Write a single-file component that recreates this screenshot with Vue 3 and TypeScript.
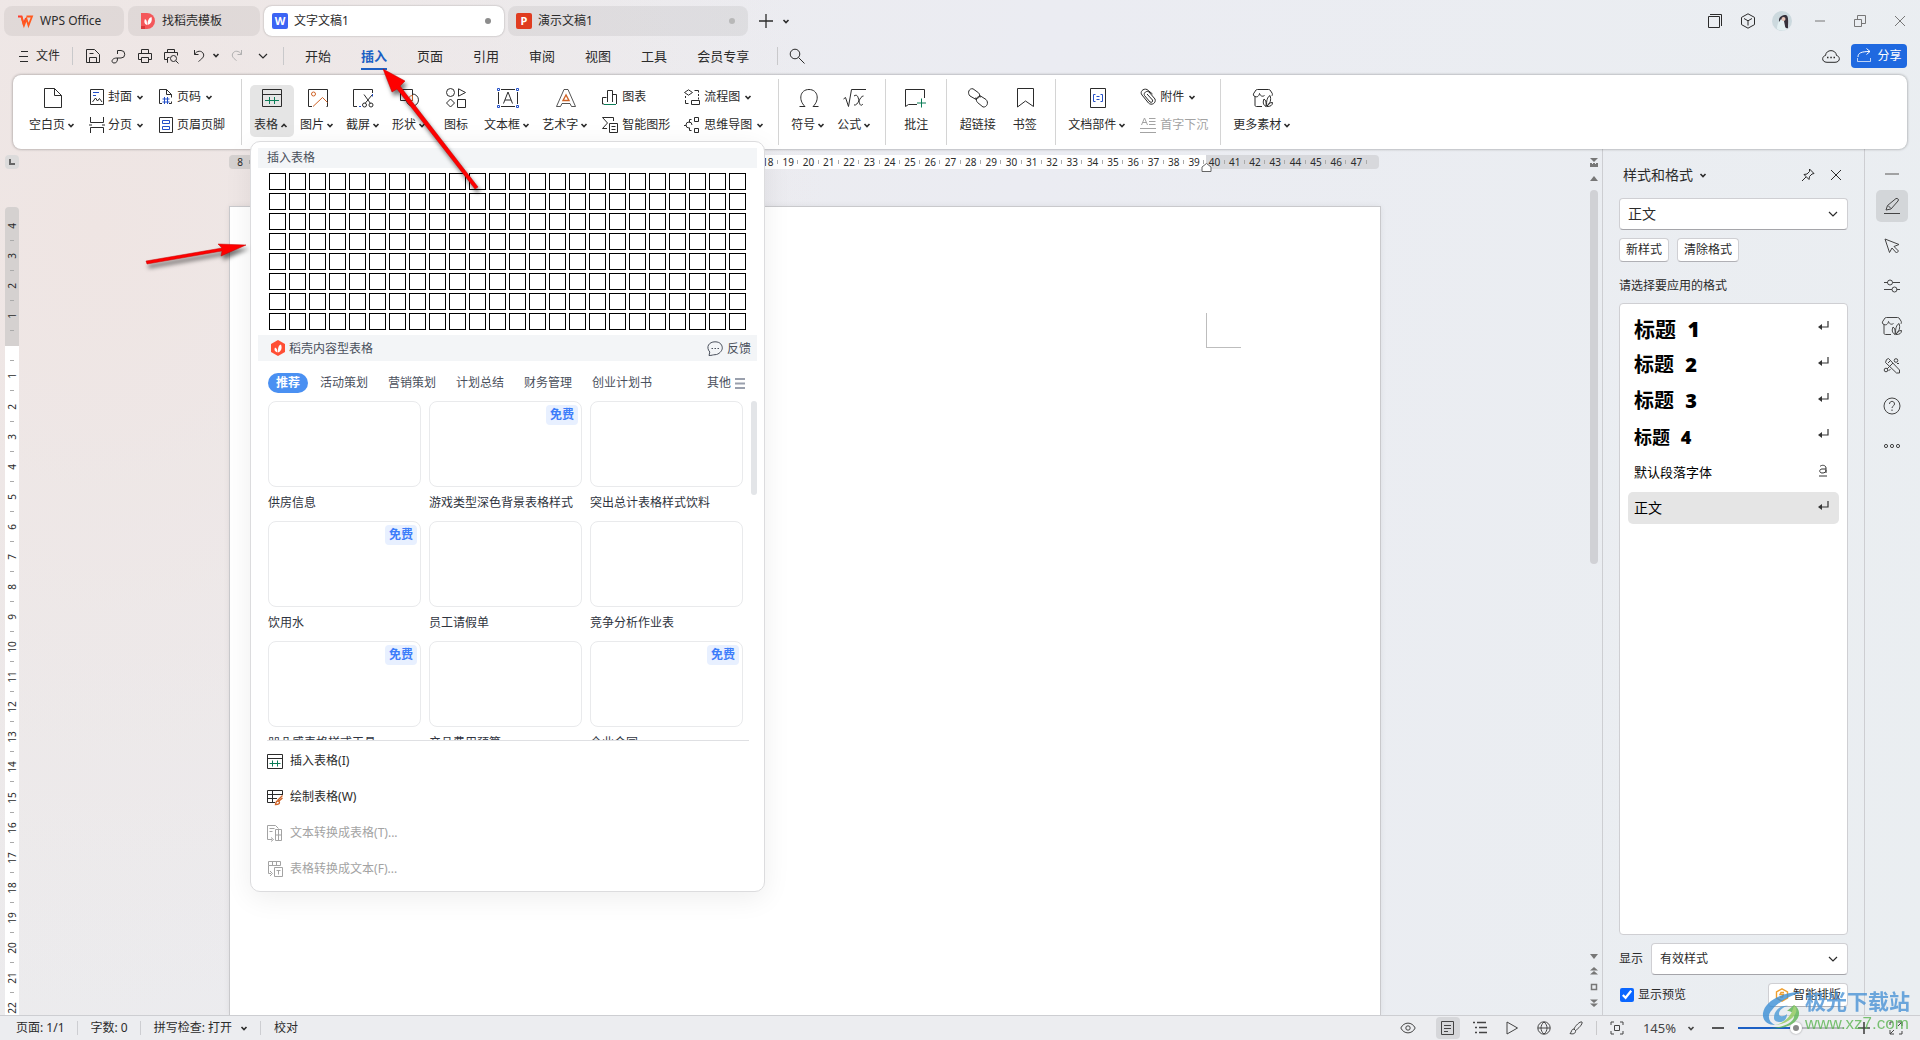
<script setup lang="ts">
import { h, ref } from 'vue'

interface Tool {
  label: string
  icon: string
  drop?: boolean
  off?: boolean
}

const glyphs: Record<string, [number, number, string]> = {
  chev: [8, 5, '<path d="M1.500 1L4 3.500 6.500 1" stroke-width="1.600"/>'],
  chevUp: [8, 5, '<path d="M1.500 4L4 1.500 6.500 4" stroke-width="1.600"/>'],
  chevWide: [10, 6, '<path d="M1 1l4 4 4-4" stroke-width="1.200"/>'],
  wps: [16, 12, '<path d="M1 1.500h3.500l2 7.500L9 3" stroke="#ff3a2e" stroke-width="1.800"/><path d="M4.500 1.500L7 10.500 9.500 4l2 6.500L15 1.500H9.500" stroke="#ff5a1f" stroke-width="1.800"/>'],
  docer: [14, 16, '<path d="M0 0h6a8 8 0 0 1 0 16H0z" fill="#f4575a" stroke="none"/><path d="M0 13h4v3H0z" fill="#d9383b" stroke="none"/><path d="M6 12c-3-1-3-4-2-6 2 1 2 3 2 6zm.500 0c0-4 1-7 4-8 1 4-.500 7-4 8z" fill="#fff" stroke="none"/>'],
  menu: [10, 12, '<path d="M2 1.500h7M0 6.500h9M1 11.500h8"/>'],
  save: [16, 16, '<path d="M1.500 1.500h8l5 5v8h-13zM4.500 14.500v-5h7v5M4.500 5.500h4"/>'],
  pdf: [16, 16, '<path d="M6.500 6V2.500h3.500a3.500 3.500 0 0 1 0 7.500H6c-6 0-6 5-3 5 3 0 3.500-2 3.500-5"/>'],
  print: [16, 16, '<path d="M4.500 5.500v-4h7v4M4.500 11.500h-3v-6h13v6h-3M4.500 9.500h7v5h-7z"/>'],
  preview: [16, 16, '<path d="M4.500 4.500v-3h7v3M4.500 13.500v-2h-3v-7h13v3M5 14.500H4.500v-5h2"/><circle cx="10.500" cy="10.500" r="3"/><path d="M13 13l2.500 2.500"/>'],
  undo: [14, 14, '<path d="M2.500 1v4.500h4M2.500 5.500C4.500 1.500 10 1 11.500 5c1 3-2 5-5 7.500"/>'],
  redo: [14, 14, '<path d="M11.500 1v4.500h-4M11.500 5.500C9.500 1.500 4 1 2.500 5c-1 3 2 5 4 6.500"/>'],
  search: [16, 16, '<circle cx="6" cy="6" r="4.800"/><path d="M9.500 9.500l6 6"/>'],
  plus: [14, 14, '<path d="M7 0v14M0 7h14" stroke-width="1.300"/>'],
  pages: [16, 16, '<path d="M1.500 3.500h11v11h-11zM3 1.500h11.500V13"/>'],
  cube: [16, 16, '<path d="M8 .8l6.500 3.600v7.200L8 15.200l-6.500-3.600V4.400zM4 5.500l4 2.300 4-2.300M8 7.800v4.700"/>'],
  min: [12, 12, '<path d="M1 6h10"/>'],
  restore: [12, 12, '<path d="M.5 4.500h7v7h-7zM3.500 4.500v-4h8v8h-4"/>'],
  close: [12, 12, '<path d="M1 1l10 10M11 1L1 11"/>'],
  cloud: [18, 14, '<path d="M5 13.300c-5.500 0-5.500-6-1.500-6.800C4 0 14 0 14.500 6.500c4 .8 4 6.800-1.500 6.800z"/><path d="M5 8.500h1.500M8.300 8.500h1.500M11.500 8.500H13" stroke-width="1.500"/>'],
  share: [16, 15, '<path d="M2 9c0-4 3-5.500 12-5.500M10.500.5l3.500 3-3.500 3" /><path d="M1.500 10v3.500h13V10" opacity=".7"/>'],
  blank: [20, 20, '<path d="M1.500.5h10l7 7v12h-17zM11.500.5v7h7"/>'],
  cover: [16, 16, '<path d="M1.500.5h13v15h-13z"/><path d="M4 3.500h6M4 6.500h3" stroke="#2450c8"/><path d="M3.500 13l3-4 2 3 2-2.500 2.500 3.500"/>'],
  break: [16, 16, '<path d="M1.500 0v5.500h13V0M1.500 16v-5.500h13V16M0 8h3M13 8h3"/>'],
  pageNo: [16, 16, '<path d="M4 14.500H1.500V.5h7l5 5v3M8.500.5v5h5M11 14.500h2.500v-2"/><path d="M6.500 8v7M9.500 8v7M4.500 10h7M4.500 13h7" stroke="#2450c8"/>'],
  header: [16, 16, '<path d="M1.500.5h13v15h-13z"/><path d="M4.500 3.500h7v3h-7zM4.500 9.500h7v3h-7z" stroke="#2450c8"/>'],
  table: [20, 20, '<path d="M.5 1.500h19v17H.5zM.5 6.500h19"/><path d="M3 12.500h14M7.500 9v7M12.500 9v7" stroke="#0b7d57"/>'],
  image: [20, 20, '<path d="M4 18.500H.5v-17h19v17h-1"/><circle cx="5.500" cy="6" r="2" stroke="#cf6326"/><path d="M5 18.500l9.500-9 5 5" stroke="#cf6326"/>'],
  shot: [22, 20, '<path d="M4 18.500H.5v-17h19V5"/><path d="M19.500 6v2.500M6 18.500h2" stroke="#2450c8"/><path d="M11 6.500l6.500 9M19 7l-7 8.500"/><circle cx="11.500" cy="17" r="2"/><circle cx="18" cy="17" r="2"/>'],
  shape: [22, 20, '<path d="M1.500 1.500h12v11h-12z"/><path d="M13.500 6a6 6 0 1 1-6 6.500"/><path d="M13.500 7.500v5H9c0-3 2-5 4.500-5z" stroke="#cf6326"/>'],
  icons: [20, 20, '<circle cx="4.500" cy="4.500" r="4"/><path d="M12.500.8v7.400l7-3.700zM4.500 11l4 4-4 4-4-4zM11.500 11.500h8v8h-8z"/>'],
  textbox: [22, 20, '<path d="M4 1.500h14M4 18.500h14M1.500 4v12M20.500 4v12M6.500 15.500L11 4l4.500 11.500M8 12h6"/><path d="M.5.5h2v2h-2zM19.500.5h2v2h-2zM.5 17.500h2v2h-2zM19.500 17.500h2v2h-2z" stroke="#2450c8"/>'],
  art: [20, 20, '<path d="M8 1.500h4l7.500 17h-4l-1.500-3H6l-1.500 3h-4z" opacity=".8"/><path d="M10 7l-3 5.500h6z" stroke="#cf6326" stroke-width="1.400"/>'],
  chart: [16, 16, '<path d="M2 15H.5V8.500h4M5.500 13V1.500h5V13M10.500 5.500h4V15"/><path d="M2 15.500h12" stroke="#0b7d57"/>'],
  smart: [16, 16, '<path d="M11.500 4V.5h-11l5 5.500-5 5.500H5M7.500 6.500h8v9h-8zM9.500 9.500h4M9.500 12.500h4"/>'],
  flow: [16, 16, '<path d="M4.500.8l4 2.700-4 2.700-4-2.700zM10.500 1.500h4v2M14.500 5v2M14.500 8.500v2M1.500 7v2M1.500 11v3.500h3M7.500 11.500h8v4h-8z"/>'],
  mind: [16, 16, '<path d="M10.500.5h4v4h-4zM10.500 11.500h4v4h-4zM7.500 2.500h-2v3M7.500 13.500h-2v-3M0 8.500h2M8 8a3 3 0 1 0-3 3"/>'],
  omega: [20, 20, '<path d="M.5 18.500H6C-1 12 1 1.500 10 1.500s11 10.500 4 17h5.500"/>'],
  sqrt: [24, 20, '<path d="M.5 11l2-1.500 3 9L8.500 1.500H23M11 8c3-2 4 0 5 5s2 5 4 3M20.500 8c-4 0-5 10-9.500 9"/>'],
  comment: [22, 20, '<path d="M19.500 10v-8.500H.5v17l3-2H12"/><path d="M16.500 10.500v9M12 15h9" stroke="#0b7d57"/>'],
  link: [22, 20, '<path d="M10 12L3 8C0 5 2 0 6 .8l5.500 4C14 7 12 12 8 10"/><path d="M12 7l7 4.500c3 3 1 8-3 7.500l-5.500-4.500C8 12 10 7 14 9"/>'],
  bookmark: [18, 20, '<path d="M1.500.5h16v18L9.500 13l-8 6z"/>'],
  parts: [18, 20, '<path d="M1.500.5h15v19h-15z"/><path d="M6.500 6.500h-2v7h2M11.500 6.500h2v7h-2M7.500 8.500h3M7.500 11.500h3" stroke="#2450c8"/>'],
  clip: [16, 16, '<path d="M12.500 5L7 .5C3-1-.5 3 2 6l6.500 8c3 3 8 0 6.500-4L9 3C7 1 3 4 4.500 6.500L10 13c2 1 3-.5 2.500-2L7 5"/>'],
  drop: [16, 16, '<path d="M1.500 8l3-7 3 7M2.500 5.500h4M9 1.500h6.500M9 4.500h6.500M9 7.500h6.500M0 11.500h16M0 15.500h16"/>'],
  material: [20, 20, '<path d="M9 18.500H3.500c-1 0-1.500-.5-1.500-1.500V8.500C0 8 0 6 1 5l2-3c.5-.4 1-.5 1.500-.5h11c.6 0 1 .1 1.500.5l2 3c.5.800.5 1.800 0 2.800M2 8.500c2.500 1 4-.5 4.500-3 .8 2.500 3 3.500 5 2"/><path d="M13 18.500c-3.500-2-3-5-2-7.500 2 1 2.500 4 2 7.500zm.800 0c-.8-6 .7-9.500 3.200-11 1.500 4 .300 8-3.200 11zm.200 0c1-3 3-4 5.500-4 0 3-2 4-5.500 4z"/>'],
  hex: [14, 16, '<path d="M7 0l7 4v8l-7 4-7-4V4z" fill="#ff4f35" stroke="none"/><path d="M6.500 12.500c-3-1-3.500-3-2.500-5 2 1 2.500 2.500 2.500 5zm.5 0c0-4 0-7 3-8 1.500 4 0 7-3 8z" fill="#fff" stroke="none"/>'],
  bubble: [16, 15, '<path d="M2 14.500l.8-3.500C-1.500 6 2 .8 8 .8s7.300 4 7.300 6.400S12 13.700 8 13.700c-2 0-3 .8-6 .8z"/><path d="M4.500 7.500h1.500M7.500 7.500h1.500M10.500 7.500H12"/>'],
  lines: [10, 11, '<path d="M0 1h10M0 5.500h10M0 10h10" stroke="#9aa0ad" stroke-width="1.800"/>'],
  mTable: [16, 16, '<path d="M.5 1.500h15v14H.5zM.5 5.500h15"/><path d="M2.500 10.500h11M5.500 7.500v6M10.500 7.500v6" stroke="#0b7d57"/>'],
  mDraw: [16, 16, '<path d="M8 13.500H.5v-12h15V6M.5 5.500h15M.5 9.500H10M5.500 1.500v12"/><path d="M15.500 6.500l-5 5M8.500 15.500c1 0 4 0 4-2s-3-2-3.500 0zM12 12l3.500-3" stroke="#cf6326" stroke-width="1.300"/>'],
  mToTable: [16, 16, '<path d="M5 14.500H.5v-14h8l3 3M2.500 3.500h5M2.500 6.500h3M4 12.500l2.500 2-2.500 2M8.500 4.500h6v11h-6zM8.500 10h6M11.500 4.500v11"/>'],
  mToText: [16, 16, '<path d="M1.500.5h12v4h-12zM5.500.5v4M9.500.5v4M1.500 4.500v8H4M3 10l2.500 2.500L3 15M7.500 6.500h8v9h-8zM9.500 9.500h4M11.500 9.500v4"/>'],
  pin: [14, 14, '<path d="M8.500 1l4.500 4.500-2 .5-2.500 2.500-.5 3L3 6.500l3-.5L8.500 3.500zM5 9L1 13"/>'],
  enter: [12, 10, '<path d="M11 0v6H3" stroke-width="1.200"/><path d="M1 6l4-3v6z" fill="currentColor" stroke="none"/>'],
  under: [10, 13, '<path d="M2 2.500c1.500-2 6-1.500 6 1.500v5M8 5H4c-3 0-3 4 0 4s4-1 4-3M1 12h8"/>'],
  pen: [18, 18, '<path d="M1 16.500h16M3 13l1.500-4.500 8.500-7c2-.5 3 1 2 2.500L8 12zM5 8.500l3 3"/>'],
  cursor: [18, 18, '<path d="M2 2l4.500 13.500 2.500-4.500 4.500 5 2-2-4.500-4.500 5-2z"/>'],
  sliders: [18, 14, '<path d="M1 3.500h4M9.500 3.500H17M1 10.500h8M13.500 10.500H17"/><circle cx="7" cy="3.500" r="2.500"/><circle cx="11.500" cy="10.500" r="2.500"/>'],
  tools: [18, 18, '<path d="M3.500 2.500l2-1L16.500 13v3h-3L2.500 5.500zM5 6l2.500-2.500"/><circle cx="3" cy="13" r="1.800"/><circle cx="13" cy="3.500" r="1.800"/><path d="M10 6l-6 6M5.500 14l2-2M14 6.500h2"/>'],
  help: [18, 18, '<circle cx="9" cy="9" r="8"/><path d="M6.500 7c0-3.500 5-3.500 5 0 0 2-2.500 2-2.500 4M9 12.500v1.500"/>'],
  dots: [18, 6, '<circle cx="3" cy="3" r="1.600"/><circle cx="9" cy="3" r="1.600"/><circle cx="15" cy="3" r="1.600"/>'],
  dash: [16, 4, '<path d="M1 2h14" stroke-width="1.500"/>'],
  eye: [16, 12, '<path d="M.8 6C4-.5 12-.5 15.200 6 12 12.500 4 12.500.8 6z"/><circle cx="8" cy="6" r="2.200"/>'],
  doc: [14, 14, '<path d="M.5.5h12v13H.5zM3 4.500h7M3 7.500h7M3 10.500h4"/>'],
  list: [16, 14, '<path d="M1 1.500h2M5 1.500h9M3 6.500h2M7 6.500h8M3 11.500h2M7 11.500h8" stroke-width="1.300"/>'],
  play: [14, 14, '<path d="M2 1l10.500 6L2 13z"/>'],
  globe: [14, 14, '<circle cx="7" cy="7" r="6.200"/><path d="M1 7h12M7 1c-4 3-4 9 0 12 4-3 4-9 0-12z"/>'],
  brush: [14, 14, '<path d="M13 1c-2-1-7 4-8 7l1.500 1.500C9 8 14 3 13 1zM5 8c-3 0-2 3-4 4.500 3 1 6 0 5.500-3"/>'],
  fit: [14, 14, '<path d="M1 4V1h3M10 1h3v3M13 10v3h-3M4 13H1v-3M4.500 4.500h5v5h-5z"/>'],
  minus: [12, 12, '<path d="M0 6h12" stroke-width="1.800"/>'],
  add: [12, 12, '<path d="M0 6h12M6 0v12" stroke-width="1.600"/>'],
  full: [14, 14, '<path d="M9 1h4v4M13 1L9 5M5 13H1V9M1 13l4-4M1 4V1h3M10 13h3v-3"/>'],
  smartSort: [14, 14, '<path d="M7 .8l5.500 3.100v6.200L7 13.200l-5.500-3.100V3.900zM9 4.500H6L5 6.500h3.500l-1 2.500H5" stroke="#f0a030" stroke-width="1.400"/>'],
  foldUp: [8, 9, '<path d="M0 0h8L4 4zM0 5h2v1h1V5h2v1h1V5h2v4H0z" fill="#777" stroke="none"/>'],
  triUp: [8, 5, '<path d="M4 0l4 5H0z" fill="#777" stroke="none"/>'],
  triDown: [8, 5, '<path d="M4 5l4-5H0z" fill="#777" stroke="none"/>'],
  pageUp: [8, 8, '<path d="M4 0l4 3.500H0zM4 4l4 3.500H0z" fill="#777" stroke="none"/>'],
  pageDown: [8, 8, '<path d="M4 4l4-3.500H0zM4 8l4-3.500H0z" fill="#777" stroke="none"/>'],
  square: [8, 8, '<path d="M1.500 1.500h5v5h-5z" stroke="#777" stroke-width="1.500"/>'],
}

const Glyph = (props: { name: string }) => {
  const [w, ht, body] = glyphs[props.name]
  return h('svg', {
    class: 'glyph',
    width: w,
    height: ht,
    viewBox: `0 0 ${w} ${ht}`,
    fill: 'none',
    stroke: 'currentColor',
    'aria-hidden': 'true',
    innerHTML: body,
  })
}
Glyph.props = ['name']

const quick = ['save', 'pdf', 'print', 'preview']
const menus = ['开始', '插入', '页面', '引用', '审阅', '视图', '工具', '会员专享']
const pageTools: Tool[][] = [
  [{ label: '封面', icon: 'cover', drop: true }, { label: '分页', icon: 'break', drop: true }],
  [{ label: '页码', icon: 'pageNo', drop: true }, { label: '页眉页脚', icon: 'header' }],
]
const insertTools: Tool[] = [
  { label: '图片', icon: 'image', drop: true },
  { label: '截屏', icon: 'shot', drop: true },
  { label: '形状', icon: 'shape', drop: true },
  { label: '图标', icon: 'icons' },
  { label: '文本框', icon: 'textbox', drop: true },
  { label: '艺术字', icon: 'art', drop: true },
]
const chartTools: Tool[][] = [
  [{ label: '图表', icon: 'chart' }, { label: '智能图形', icon: 'smart' }],
  [{ label: '流程图', icon: 'flow', drop: true }, { label: '思维导图', icon: 'mind', drop: true }],
]
const midGroups: Tool[][] = [
  [{ label: '符号', icon: 'omega', drop: true }, { label: '公式', icon: 'sqrt', drop: true }],
  [{ label: '批注', icon: 'comment' }],
  [{ label: '超链接', icon: 'link' }, { label: '书签', icon: 'bookmark' }],
]
const attachTools: Tool[] = [
  { label: '附件', icon: 'clip', drop: true },
  { label: '首字下沉', icon: 'drop', off: true },
]

const hMarks = Array.from({ length: 56 }, (_, i) => Math.abs(i - 8))
const vMarks = Array.from({ length: 27 }, (_, i) => Math.abs(i - 4))

const categories = ['推荐', '活动策划', '营销策划', '计划总结', '财务管理', '创业计划书']
const cards = [
  { name: '供房信息', free: false },
  { name: '游戏类型深色背景表格样式', free: true },
  { name: '突出总计表格样式饮料', free: false },
  { name: '饮用水', free: true },
  { name: '员工请假单', free: false },
  { name: '竞争分析作业表', free: false },
  { name: '凹凸感表格样式工具', free: true },
  { name: '产品费用预算', free: false },
  { name: '企业合同', free: true },
]
const actions: Tool[] = [
  { label: '插入表格(I)', icon: 'mTable' },
  { label: '绘制表格(W)', icon: 'mDraw' },
  { label: '文本转换成表格(T)...', icon: 'mToTable', off: true },
  { label: '表格转换成文本(F)...', icon: 'mToText', off: true },
]

const styleRows = [
  { name: '标题', level: '1', cls: 'title h1', mark: 'enter' },
  { name: '标题', level: '2', cls: 'title h2', mark: 'enter' },
  { name: '标题', level: '3', cls: 'title h2', mark: 'enter' },
  { name: '标题', level: '4', cls: 'title h4', mark: 'enter' },
  { name: '默认段落字体', level: '', cls: 'plain', mark: 'under' },
  { name: '正文', level: '', cls: 'body', mark: 'enter' },
]
const sideTools = ['pen', 'cursor', 'sliders', 'material', 'tools', 'help', 'dots']
const views = ['doc', 'list', 'play', 'globe', 'brush']

const preview = ref(true)
const zoom = ref(55)
const current = ref('正文')
const shown = ref('有效样式')
</script>

<template>
  <div class="app">
    <header class="titlebar">
      <button class="tab home"><Glyph name="wps" /><span>WPS Office</span></button>
      <button class="tab store"><Glyph name="docer" /><span>找稻壳模板</span></button>
      <button class="tab file active"><i class="badge w">W</i><span>文字文稿1</span><b class="dot"></b></button>
      <button class="tab file"><i class="badge p">P</i><span>演示文稿1</span><b class="dot pale"></b></button>
      <button class="add" aria-label="新建"><Glyph name="plus" /></button>
      <button class="more" aria-label="标签列表"><Glyph name="chev" /></button>
      <div class="window">
        <button aria-label="页面"><Glyph name="pages" /></button>
        <button aria-label="应用"><Glyph name="cube" /></button>
        <button class="avatar" aria-label="账号">
          <svg width="20" height="20" viewBox="0 0 20 20"><circle cx="10" cy="10" r="10" fill="#ccd9de" /><path d="M5 18c0-4 1-7 4-9l5 2 1 7c-3 2-7 2-10 0z" fill="#e4f0f2" /><path d="M7 9c0-3 3-5 7-5 3 1 2 8 2 13-2 1-3-1-3-2l-1-5-3-2-2 3z" fill="#35303a" /><circle cx="11.500" cy="8" r="2" fill="#e9c5b8" /></svg>
        </button>
        <button class="sys" aria-label="最小化"><Glyph name="min" /></button>
        <button class="sys" aria-label="还原"><Glyph name="restore" /></button>
        <button class="sys" aria-label="关闭"><Glyph name="close" /></button>
      </div>
    </header>

    <nav class="menubar">
      <button class="filemenu"><Glyph name="menu" />文件</button>
      <i class="vline"></i>
      <div class="quick">
        <button v-for="q in quick" :key="q" :aria-label="q"><Glyph :name="q" /></button>
        <button class="undo" aria-label="撤销"><Glyph name="undo" /><Glyph name="chev" /></button>
        <button class="faded" aria-label="恢复"><Glyph name="redo" /></button>
        <button aria-label="更多"><Glyph name="chevWide" /></button>
      </div>
      <i class="vline"></i>
      <div class="menus">
        <button v-for="m in menus" :key="m" :class="{ on: m === '插入' }">{{ m }}</button>
      </div>
      <i class="vline"></i>
      <button class="find" aria-label="搜索"><Glyph name="search" /></button>
      <div class="sharebox">
        <button aria-label="云同步"><Glyph name="cloud" /></button>
        <button class="share"><Glyph name="share" />分享</button>
      </div>
    </nav>

    <section class="ribbon">
      <div class="group">
        <button class="big"><span class="ico"><Glyph name="blank" /></span><span class="lab">空白页<em><Glyph name="chev" /></em></span></button>
        <div v-for="(col, i) in pageTools" :key="i" class="stack">
          <button v-for="t in col" :key="t.label"><Glyph :name="t.icon" /><span class="lab">{{ t.label }}<em v-if="t.drop"><Glyph name="chev" /></em></span></button>
        </div>
      </div>
      <div class="group">
        <div class="anchor">
          <button class="big open"><span class="ico"><Glyph name="table" /></span><span class="lab">表格<em><Glyph name="chevUp" /></em></span></button>

          <div class="popup">
            <h2 class="strip">插入表格</h2>
            <div class="cells">
              <button v-for="n in 192" :key="n" :aria-label="`${Math.ceil(n / 24)} × ${((n - 1) % 24) + 1}`"></button>
            </div>
            <div class="strip docer">
              <Glyph name="hex" /><h2>稻壳内容型表格</h2>
              <button><Glyph name="bubble" />反馈</button>
            </div>
            <div class="cats">
              <button v-for="(c, i) in categories" :key="c" :class="{ sel: i === 0 }">{{ c }}</button>
              <button class="other">其他<Glyph name="lines" /></button>
            </div>
            <div class="shelf">
              <div class="gallery">
                <figure v-for="c in cards" :key="c.name">
                  <div class="thumb"><span v-if="c.free">免费</span></div>
                  <figcaption>{{ c.name }}</figcaption>
                </figure>
              </div>
              <i class="thumbbar"></i>
            </div>
            <div class="actions">
              <button v-for="a in actions" :key="a.label" :disabled="a.off"><Glyph :name="a.icon" />{{ a.label }}</button>
            </div>
          </div>
        </div>
        <button v-for="t in insertTools" :key="t.label" class="big"><span class="ico"><Glyph :name="t.icon" /></span><span class="lab">{{ t.label }}<em v-if="t.drop"><Glyph name="chev" /></em></span></button>
        <div v-for="(col, i) in chartTools" :key="i" class="stack wide">
          <button v-for="t in col" :key="t.label"><Glyph :name="t.icon" /><span class="lab">{{ t.label }}<em v-if="t.drop"><Glyph name="chev" /></em></span></button>
        </div>
      </div>
      <div v-for="(g, i) in midGroups" :key="i" class="group" :class="{ links: i === 2 }">
        <button v-for="t in g" :key="t.label" class="big"><span class="ico"><Glyph :name="t.icon" /></span><span class="lab">{{ t.label }}<em v-if="t.drop"><Glyph name="chev" /></em></span></button>
      </div>
      <div class="group">
        <button class="big"><span class="ico"><Glyph name="parts" /></span><span class="lab">文档部件<em><Glyph name="chev" /></em></span></button>
        <div class="stack wide">
          <button v-for="t in attachTools" :key="t.label" :disabled="t.off"><Glyph :name="t.icon" /><span class="lab">{{ t.label }}<em v-if="t.drop"><Glyph name="chev" /></em></span></button>
        </div>
      </div>
      <div class="group">
        <button class="big"><span class="ico"><Glyph name="material" /></span><span class="lab">更多素材<em><Glyph name="chev" /></em></span></button>
      </div>
    </section>

    <main class="work">
      <div class="gutter">
        <button class="corner" aria-label="制表符"><svg width="6" height="6" viewBox="0 0 6 6"><path d="M1 0v5h5" fill="none" stroke="#666" stroke-width="2" /></svg></button>
        <div class="vruler">
          <div class="vmarks">
            <span v-for="(n, i) in vMarks" :key="i"><b>{{ n || '' }}</b></span>
          </div>
        </div>
      </div>
      <div class="canvas">
        <div class="hruler">
          <span v-for="(n, i) in hMarks" :key="i">{{ n || '' }}</span>
          <svg class="indent" width="11" height="10" viewBox="0 0 11 10"><path d="M1 4l4.500-3.500L10 4v4.500H1z" fill="#fff" stroke="#666" /></svg>
        </div>
        <article class="paper"><i class="crop"></i></article>
      </div>
      <div class="scroll">
        <Glyph name="foldUp" />
        <Glyph name="triUp" />
        <i class="bar"></i>
        <div class="pager"><Glyph name="triDown" /><Glyph name="pageUp" /><Glyph name="square" /><Glyph name="pageDown" /></div>
      </div>

      <aside class="panel">
        <div class="head">
          <button class="name">样式和格式<Glyph name="chev" /></button>
          <button aria-label="固定"><Glyph name="pin" /></button>
          <button aria-label="关闭面板"><Glyph name="close" /></button>
        </div>
        <div class="pick large">
          <select v-model="current" aria-label="当前样式"><option>正文</option></select>
          <Glyph name="chevWide" />
        </div>
        <div class="pair"><button>新样式</button><button>清除格式</button></div>
        <p class="hint">请选择要应用的格式</p>
        <div class="styles">
          <button v-for="s in styleRows" :key="s.name + s.level" :class="s.cls"><span>{{ s.name }} <b v-if="s.level">{{ s.level }}</b></span><em><Glyph :name="s.mark" /></em></button>
        </div>
        <div class="row">
          <label for="shown">显示</label>
          <div class="pick">
            <select id="shown" v-model="shown"><option>有效样式</option></select>
            <Glyph name="chevWide" />
          </div>
        </div>
        <div class="row last">
          <label class="check"><input v-model="preview" type="checkbox" />显示预览</label>
          <button class="sort"><Glyph name="smartSort" />智能排版</button>
        </div>
      </aside>

      <aside class="side">
        <button class="fold" aria-label="收起"><Glyph name="dash" /></button>
        <button v-for="(s, i) in sideTools" :key="s" :class="{ on: i === 0 }" :aria-label="s"><Glyph :name="s" /></button>
      </aside>
    </main>

    <footer class="status">
      <span>页面: 1/1</span>
      <span>字数: 0</span>
      <button>拼写检查: 打开<Glyph name="chev" /></button>
      <span>校对</span>
      <div class="tools">
        <button class="eye" aria-label="护眼"><Glyph name="eye" /></button>
        <button v-for="(v, i) in views" :key="v" :class="{ on: i === 0 }" :aria-label="v"><Glyph :name="v" /></button>
        <i class="vline"></i>
        <button aria-label="适应"><Glyph name="fit" /></button>
        <button class="percent">145%<Glyph name="chev" /></button>
        <button aria-label="缩小"><Glyph name="minus" /></button>
        <input v-model="zoom" type="range" min="0" max="100" aria-label="缩放" />
        <button aria-label="放大"><Glyph name="add" /></button>
        <button aria-label="全屏"><Glyph name="full" /></button>
      </div>
    </footer>

    <svg class="arrows" width="500" height="300" viewBox="0 0 500 300" aria-hidden="true">
      <g fill="#fe0000" stroke="#c00000" stroke-width=".5">
        <path d="M383 69l22 12-5 5 78 101-3 2-78-100-5 3z" />
        <path d="M246 245l-25 11 1-5-75 13-1-3 76-13-4-4z" />
      </g>
    </svg>

    <div class="mark" aria-hidden="true">
      <svg width="44" height="40" viewBox="0 0 44 40">
        <path d="M42 1C24 0 4 9 2 22c-1 8 5 12 12 12-7-3-8-10-3-15C18 10 30 4 42 1z" fill="#3b8fd6" />
        <path d="M33 14c8 5 6 14-2 19-7 4-15 5-23 4 13 0 24-5 25-11 1-4-3-6-7-6z" fill="#5cb552" />
        <path d="M13 27c0-8 7-13 14-12-5 1-9 4-9 8 0 3 5 3 8 0 0 5-3 8-7 8-3 0-6-1-6-4z" fill="#4a9bd8" />
        <path d="M33 14c4 4 3 9-3 14-4 3-10 6-17 6 9-1 18-8 20-20z" fill="#8fcb5a" />
      </svg>
      <div><b>极光下载站</b><span>www.xz7.com</span></div>
    </div>
  </div>
</template>

<style>
body {
  margin: 0;
}
</style>

<style scoped>
.app {
  position: relative;
  display: flex;
  flex-direction: column;
  height: 100vh;
  overflow: hidden;
  background:
    radial-gradient(ellipse 38% 75% at 5% 22%, #efe5e3, #efe5e300),
    linear-gradient(100deg, #ecebec, #ebecf2 50%, #eaeef1);
  color: #2b2b2b;
  font: 12px/16px "Noto Sans", "Noto Sans CJK SC", sans-serif;
}
.glyph {
  display: block;
  flex: none;
  overflow: visible;
}
button,
select,
input {
  font: inherit;
  color: inherit;
  margin: 0;
}
button {
  display: flex;
  align-items: center;
  justify-content: center;
  padding: 0;
  border: 0;
  background: none;
  white-space: nowrap;
}
em,
i {
  font-style: normal;
}
h2,
p,
figure {
  margin: 0;
  font: inherit;
}
.vline {
  width: 1px;
  height: 18px;
  background: #c9c9cb;
}

.titlebar {
  display: flex;
  gap: 4px;
  padding: 6px 0 0 4px;
}
.tab {
  justify-content: flex-start;
  gap: 7px;
  height: 30px;
  padding: 0 13px;
  border-radius: 8px;
  background: #0000000f;
}
.home {
  width: 120px;
}
.store {
  width: 132px;
}
.file {
  width: 240px;
  padding-left: 8px;
  gap: 6px;
}
.tab.active {
  background: #fff;
  box-shadow: 0 0 2px #0005;
}
.badge {
  width: 16px;
  height: 16px;
  border-radius: 2px;
  color: #fff;
  font: bold 11px/15px "Noto Sans", sans-serif;
  text-align: center;
}
.badge.w {
  background: #3c64f4;
}
.badge.p {
  background: #e03c20;
}
.dot {
  width: 6px;
  height: 6px;
  margin-left: auto;
  border-radius: 50%;
  background: #8c8c8c;
}
.dot.pale {
  background: #b8b8b8;
}
.add {
  width: 28px;
}
.more {
  width: 4px;
}
.window {
  display: flex;
  margin-left: auto;
  align-items: center;
}
.window button {
  width: 33px;
  height: 28px;
}
.window .sys {
  width: 40px;
  color: #777;
}
.window .avatar {
  width: 36px;
}

.menubar {
  display: flex;
  align-items: center;
  height: 39px;
}
.filemenu {
  gap: 7px;
  margin: 0 12px 0 19px;
}
.quick {
  display: flex;
  padding: 0 7px;
}
.quick button {
  width: 26px;
  height: 24px;
}
.quick .undo {
  width: 40px;
  gap: 6px;
  padding-left: 4px;
}
.quick .faded {
  color: #b0b0b0;
}
.menus {
  display: flex;
  gap: 30px;
  padding: 0 28px 0 21px;
  font-size: 13px;
}
.menus button {
  height: 28px;
  border: 2px solid transparent;
  border-width: 2px 0;
}
.menus .on {
  border-bottom-color: #1c5fc4;
  color: #1c5fc4;
  font-weight: bold;
}
.find {
  width: 38px;
}
.sharebox {
  display: flex;
  gap: 11px;
  margin-left: auto;
  padding-right: 13px;
}
.share {
  gap: 5px;
  width: 56px;
  height: 24px;
  border-radius: 4px;
  background: #1f69e0;
  color: #fff;
}

.ribbon {
  position: relative;
  z-index: 2;
  display: flex;
  flex: none;
  height: 74px;
  margin: 0 13px;
  padding-left: 4px;
  border-radius: 8px;
  background: #fff;
  box-shadow: 0 0 3px #0006;
}
.group {
  display: flex;
  gap: 2px;
  margin: 4px 0;
  padding: 6px 8px;
}
.group + .group {
  border-left: 1px solid #d4d4d4;
}
.big {
  flex-direction: column;
  justify-content: flex-start;
  gap: 7px;
  min-width: 44px;
  height: 52px;
  padding: 1px 4px 0;
  border-radius: 5px;
}
.links .big {
  min-width: 45px;
}
.big.open {
  background: #e5e5e5;
}
.ico {
  display: flex;
  align-items: center;
  height: 24px;
}
.lab {
  display: flex;
  align-items: center;
}
.lab em {
  display: flex;
  justify-content: center;
  width: 12px;
}
.stack {
  display: flex;
  flex-direction: column;
  gap: 4px;
  padding: 0 4px 0 6px;
}
.stack:last-child {
  padding-right: 8px;
}
.stack button {
  justify-content: flex-start;
  gap: 3px;
  height: 24px;
}
.stack em {
  margin-left: 2px;
}
.stack.wide {
  padding: 0 6px;
}
.stack.wide:last-child {
  padding-right: 4px;
}
.stack.wide button {
  gap: 4px;
}
button:disabled {
  color: #a3a3a3;
}
.anchor {
  position: relative;
}

.popup {
  position: absolute;
  top: 56px;
  left: 0;
  display: flex;
  flex-direction: column;
  box-sizing: border-box;
  width: 515px;
  padding: 6px 7px 4px;
  border: 1px solid #dcdcde;
  border-radius: 10px;
  background: #fff;
  box-shadow: 0 6px 28px #00000012;
}
.strip {
  height: 20px;
  padding: 0 9px;
  background: #f3f5f7;
  color: #4a505c;
  line-height: 19px;
}
.cells {
  display: grid;
  grid-template-columns: repeat(24, 17px);
  gap: 3px;
  padding: 5px 11px;
}
.cells button {
  height: 17px;
  border: 1px solid #000;
}
.strip.docer {
  display: flex;
  align-items: center;
  gap: 4px;
  height: 26px;
  padding: 0 6px 0 13px;
}
.strip.docer button {
  gap: 4px;
  margin-left: auto;
}
.cats {
  display: flex;
  align-items: center;
  gap: 20px;
  padding: 12px 12px 8px 10px;
  color: #4a505c;
}
.cats button {
  height: 20px;
}
.cats .sel {
  width: 40px;
  margin-right: -8px;
  border-radius: 10px;
  background: #4a90f2;
  color: #fff;
  font-weight: bold;
}
.cats .other {
  gap: 4px;
  margin-left: auto;
}
.shelf {
  position: relative;
}
.gallery {
  display: grid;
  grid-template-columns: repeat(3, 153px);
  grid-auto-rows: 112px;
  gap: 8px;
  height: 339px;
  margin: 0 8px 0 9px;
  padding-left: 1px;
  border-bottom: 1px solid #dfe0e3;
  overflow: hidden;
}
.thumb {
  display: flex;
  justify-content: flex-end;
  box-sizing: border-box;
  height: 86px;
  padding: 3px;
  border: 1px solid #e9eaec;
  border-radius: 8px;
}
.thumb span {
  width: 32px;
  height: 20px;
  border-radius: 4px;
  background: #e8f0ff;
  color: #3d7dfa;
  font-weight: bold;
  line-height: 19px;
  text-align: center;
}
figcaption {
  padding-top: 8px;
  color: #2f3440;
  white-space: nowrap;
}
.thumbbar {
  position: absolute;
  top: 0;
  right: 0;
  width: 6px;
  height: 94px;
  border-radius: 3px;
  background: #e3e5e8;
}
.actions {
  display: flex;
  flex-direction: column;
  padding: 2px 9px 0;
}
.actions button {
  justify-content: flex-start;
  gap: 7px;
  height: 36px;
}

.work {
  display: flex;
  flex: 1;
  min-height: 0;
}
.gutter {
  display: flex;
  flex-direction: column;
  align-items: flex-start;
  gap: 38px;
  width: 24px;
  padding: 6px 0 0 5px;
  box-sizing: border-box;
}
.corner {
  width: 14px;
  height: 14px;
  border-radius: 4px;
  background: #dcdbdb;
}
.vruler {
  display: flex;
  flex: 1;
  width: 14px;
  min-height: 0;
  border-radius: 4px 4px 0 0;
  background: linear-gradient(#d5d1d0 139px, #fff 139px);
  overflow: hidden;
}
.vmarks {
  display: flex;
  flex: 1;
  flex-direction: column;
  margin-bottom: -8px;
  padding-top: 4px;
}
.vmarks span {
  display: flex;
  flex: 1;
  align-items: center;
  justify-content: center;
  min-height: 0;
  background: linear-gradient(#aaa, #aaa) center bottom / 4px 1px no-repeat;
}
.vmarks b {
  font: 10px/14px "Noto Sans", sans-serif;
  transform: rotate(-90deg);
}
.canvas {
  display: flex;
  flex: 1;
  flex-direction: column;
  min-width: 0;
  padding: 6px 201px 0 205px;
}
.hruler {
  position: relative;
  display: flex;
  flex: none;
  height: 14px;
  margin-right: 2px;
  padding: 0 12px 0 1px;
  border-radius: 4px;
  background: linear-gradient(90deg, #d5d1d0 15%, #fff 15% 85%, #d7d8dc 85%);
  font-size: 10px;
  line-height: 14px;
}
.hruler span {
  flex: 1;
  min-width: 0;
  background: linear-gradient(#aaa, #aaa) right center / 1px 4px no-repeat;
  text-align: center;
}
.indent {
  position: absolute;
  top: 8px;
  left: 85%;
  margin-left: -6px;
}
.paper {
  flex: 1;
  margin-top: 37px;
  border: 1px solid #c9c9cc;
  border-bottom: 0;
  background: #fff;
  box-shadow: 0 0 6px #00000010;
}
.crop {
  display: block;
  width: 34px;
  height: 34px;
  margin: 106px 139px 0 auto;
  border: 1px solid #bdbdbd;
  border-width: 0 0 1px 1px;
}
.scroll {
  display: flex;
  flex-direction: column;
  align-items: center;
  gap: 9px;
  width: 20px;
  padding: 9px 0 8px 4px;
  box-sizing: border-box;
}
.bar {
  width: 8px;
  height: 374px;
  border-radius: 4px;
  background: #d0d1d5;
}
.pager {
  display: flex;
  flex-direction: column;
  gap: 8px;
  margin-top: auto;
}

.panel {
  display: flex;
  flex-direction: column;
  box-sizing: border-box;
  width: 262px;
  padding: 16px 16px 8px;
  border-left: 1px solid #cdced2;
}
.head {
  display: flex;
  gap: 15px;
  height: 20px;
  margin-bottom: 13px;
  padding: 0 6px 0 4px;
}
.head .name {
  gap: 6px;
  margin-right: auto;
  font-size: 14px;
}
.pick {
  position: relative;
  flex: 1;
}
.pick.large {
  flex: none;
  font-size: 14px;
}
.pick select {
  display: block;
  box-sizing: border-box;
  width: 100%;
  height: 32px;
  padding: 0 8px;
  border: 1px solid #cfcfd3;
  border-bottom-color: #a5a5aa;
  border-radius: 4px;
  background: #fff;
  appearance: none;
}
.pick svg {
  position: absolute;
  top: 13px;
  right: 10px;
}
.pair {
  display: flex;
  gap: 8px;
  margin: 8px 0 16px;
}
.pair button,
.sort {
  height: 24px;
  padding: 0 6px;
  border: 1px solid #cfcfd3;
  border-bottom-color: #b0b0b5;
  border-radius: 4px;
  background: #fff;
}
.hint {
  margin-bottom: 9px;
}
.styles {
  display: flex;
  flex: 1;
  flex-direction: column;
  gap: 4px;
  margin-bottom: 8px;
  padding: 8px;
  border: 1px solid #cfcfd3;
  border-radius: 4px;
  background: #fff;
  color: #000;
}
.styles button {
  justify-content: space-between;
  height: 32px;
  padding: 0 10px 0 6px;
  border-radius: 5px;
}
.styles em {
  display: flex;
  justify-content: center;
  width: 12px;
  padding-bottom: 4px;
  color: #333;
}
.title {
  font-weight: bold;
}
.title span {
  padding-top: 2px;
}
.title b {
  margin-left: 6px;
}
.h1 {
  font-size: 21px;
}
.h2 {
  font-size: 20px;
}
.h4 {
  font-size: 18px;
}
.plain {
  font-size: 13px;
}
.body {
  background: #e5e5e5;
  font-size: 14px;
}
.row {
  display: flex;
  align-items: center;
  gap: 8px;
  margin-bottom: 8px;
}
.row.last {
  justify-content: space-between;
  margin: 0;
  padding-left: 1px;
}
.check {
  display: flex;
  align-items: center;
  gap: 4px;
}
.check input {
  width: 14px;
  height: 14px;
  accent-color: #0a66ff;
}
.sort {
  gap: 4px;
}
.side {
  display: flex;
  flex-direction: column;
  align-items: center;
  gap: 8px;
  box-sizing: border-box;
  width: 56px;
  padding: 17px 2px 0 0;
  border-left: 1px solid #cdced2;
  color: #444;
}
.side button {
  width: 32px;
  height: 32px;
  border-radius: 5px;
}
.side .fold {
  height: 16px;
  color: #888;
}
.side .on {
  background: #d3d6d9;
}

.status {
  display: flex;
  flex: none;
  align-items: center;
  height: 24px;
  padding: 0 12px 0 3px;
  border-top: 1px solid #cdced2;
  background: #ecedf0;
}
.status > span,
.status > button {
  height: 14px;
  padding: 0 12px 0 13px;
  line-height: 14px;
}
.status > button {
  gap: 8px;
}
.status > * + span,
.status > button {
  border-left: 1px solid #cdced2;
}
.tools {
  display: flex;
  align-items: center;
  gap: 8px;
  margin-left: auto;
  color: #444;
}
.tools button {
  width: 24px;
  height: 22px;
  border-radius: 4px;
}
.tools .eye {
  margin-right: 8px;
}
.tools .on {
  background: #d6d7da;
}
.tools .vline {
  height: 14px;
}
.tools .percent {
  justify-content: flex-end;
  gap: 11px;
  width: 61px;
  padding-right: 3px;
  font-size: 13px;
  box-sizing: border-box;
}
.tools input {
  width: 106px;
  height: 12px;
  appearance: none;
  background: linear-gradient(90deg, #1c5fc4 55%, #b9bac0 55%) center / 100% 2px no-repeat;
}
.tools input::-webkit-slider-thumb {
  appearance: none;
  box-sizing: border-box;
  width: 12px;
  height: 12px;
  border: 3px solid #fff;
  border-radius: 50%;
  background: #888;
  box-shadow: 0 0 2px #0006;
}

.arrows {
  position: absolute;
  top: 0;
  left: 0;
  z-index: 5;
  filter: drop-shadow(2px 4px 2px #0008);
  pointer-events: none;
}
.mark {
  position: absolute;
  right: 10px;
  bottom: 6px;
  z-index: 5;
  display: flex;
  align-items: center;
  opacity: 0.8;
  pointer-events: none;
}
.mark div {
  display: flex;
  flex-direction: column;
}
.mark b {
  color: #4b93d6;
  font-size: 21px;
  line-height: 26px;
}
.mark span {
  color: #5cb552;
  font: 17px/20px "Liberation Sans", sans-serif;
}
</style>
